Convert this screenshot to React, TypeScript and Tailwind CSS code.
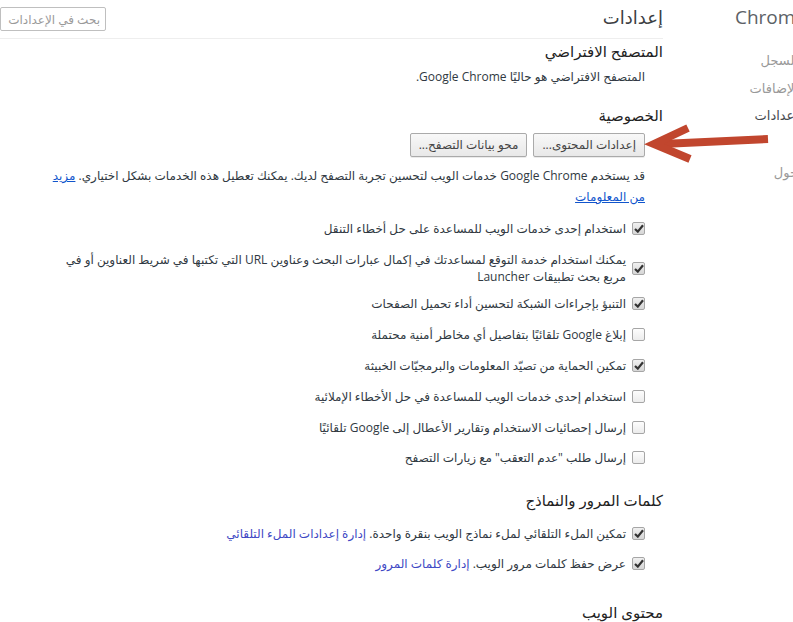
import React from "react";

const checks = [
  { on: true, mt: "mt-[13px]", text: "استخدام إحدى خدمات الويب للمساعدة على حل أخطاء التنقل" },
  {
    on: true,
    mt: "mt-[14px]",
    text: "يمكنك استخدام خدمة التوقع لمساعدتك في إكمال عبارات البحث وعناوين URL التي تكتبها في شريط العناوين أو في مربع بحث تطبيقات Launcher",
  },
  { on: true, mt: "mt-[10px]", text: "التنبؤ بإجراءات الشبكة لتحسين أداء تحميل الصفحات" },
  { on: false, mt: "mt-[14px]", text: "إبلاغ Google تلقائيًا بتفاصيل أي مخاطر أمنية محتملة" },
  { on: true, mt: "mt-[14px]", text: "تمكين الحماية من تصيّد المعلومات والبرمجيّات الخبيثة" },
  { on: false, mt: "mt-[14px]", text: "استخدام إحدى خدمات الويب للمساعدة في حل الأخطاء الإملائية" },
  { on: false, mt: "mt-[14px]", text: "إرسال إحصائيات الاستخدام وتقارير الأعطال إلى Google تلقائيًا" },
  { on: false, mt: "mt-[13px]", text: 'إرسال طلب "عدم التعقب" مع زيارات التصفح' },
];

function Checkbox({ on }: { on: boolean }) {
  return (
    <span
      className={
        "shrink-0 w-[13px] h-[13px] rounded-[2px] border border-[#a6a6a6] flex items-center justify-center " +
        (on ? "bg-gradient-to-b from-[#f0f0f0] to-[#d6d6d6]" : "bg-gradient-to-b from-[#fdfdfd] to-[#ececec]")
      }
    >
      {on && (
        <svg width="10" height="9" viewBox="0 0 10 9">
          <path d="M1 5 L3.8 7.6 L9 1.2" fill="none" stroke="#333" strokeWidth="2.2" />
        </svg>
      )}
    </span>
  );
}

function CheckRow({ on, className, children }: { on: boolean; className?: string; children: React.ReactNode }) {
  return (
    <div className={"flex items-center gap-[6px] " + (className ?? "")}>
      <Checkbox on={on} />
      <span className="text-[12px] leading-[17px] text-[#303942]">{children}</span>
    </div>
  );
}

function Button({ children }: { children: React.ReactNode }) {
  return (
    <button className="h-[24px] px-[8px] rounded-[2px] border border-[#aaaaaa] bg-gradient-to-b from-[#f8f8f8] to-[#e8e8e8] text-[12px] text-[#444] shadow-[0_1px_0_rgba(0,0,0,0.08)]">
      {children}
    </button>
  );
}

export default function App() {
  return (
    <div className="relative w-[793px] h-[622px] overflow-hidden bg-white font-['Open_Sans','DejaVu_Sans',sans-serif]">
      <div dir="rtl" className="flex w-[820px]">
        {/* left nav, mostly cut off */}
        <nav className="w-[157px] shrink-0">
          <div className="pt-[5px] pr-[14px] text-[19px] leading-[24px] text-[#5c6166]">Chrome</div>
          <ul className="pr-[22px] text-[13px] leading-[18px] text-[#999]">
            <li className="mt-[22px]">السجل</li>
            <li className="mt-[10px]">الإضافات</li>
            <li className="mt-[9px] text-[#464a50]">إعدادات</li>
            <li className="mt-[39px]">حول</li>
          </ul>
        </nav>

        <main className="w-[663px] shrink-0">
          <header className="h-[39px] flex justify-between items-start border-b border-[#eeeeee]">
            <h1 className="pt-[5px] text-[18px] leading-[24px] text-[#3c4043] font-normal">إعدادات</h1>
            <input
              placeholder="بحث في الإعدادات"
              className="mt-[7px] w-[106px] h-[24px] px-[5px] rounded-[2px] border border-[#bfbfbf] text-[12px] placeholder:text-[#9a9a9a] outline-none"
            />
          </header>

          <section className="mt-[2px]">
            <h3 className="text-[15px] leading-[20px] text-[#222]">المتصفح الافتراضي</h3>
            <p className="mt-[7px] pr-[18px] text-[12px] leading-[18px] text-[#303942]">
              المتصفح الافتراضي هو حاليًا Google Chrome.
            </p>
          </section>

          <section className="mt-[19px]">
            <h3 className="text-[15px] leading-[20px] text-[#222]">الخصوصية</h3>
            <div className="pr-[18px] pl-[46px]">
              <div className="mt-[8px] flex gap-[6px]">
                <Button>إعدادات المحتوى...</Button>
                <Button>محو بيانات التصفح...</Button>
              </div>
              <p className="mt-[8px] text-[12px] leading-[21px] text-[#303942]">
                قد يستخدم Google Chrome خدمات الويب لتحسين تجربة التصفح لديك. يمكنك تعطيل هذه الخدمات بشكل اختياري.{" "}
                <a className="text-[#1155cc] underline">مزيد من المعلومات</a>
              </p>
              {checks.map((c, i) => (
                <CheckRow key={i} on={c.on} className={c.mt}>
                  {c.text}
                </CheckRow>
              ))}
            </div>
          </section>

          <section className="mt-[24px]">
            <h3 className="text-[15px] leading-[20px] text-[#222]">كلمات المرور والنماذج</h3>
            <div className="pr-[18px]">
              <CheckRow on className="mt-[15px]">
                تمكين الملء التلقائي لملء نماذج الويب بنقرة واحدة.{" "}
                <a className="text-[#4048c4]">إدارة إعدادات الملء التلقائي</a>
              </CheckRow>
              <CheckRow on className="mt-[13px]">
                عرض حفظ كلمات مرور الويب. <a className="text-[#4048c4]">إدارة كلمات المرور</a>
              </CheckRow>
            </div>
          </section>

          <section className="mt-[30px]">
            <h3 className="text-[15px] leading-[20px] text-[#222]">محتوى الويب</h3>
          </section>
        </main>
      </div>

      {/* annotation arrow drawn over the page */}
      <svg className="absolute left-0 top-0 pointer-events-none" width="793" height="622">
        <path d="M768 139 L662 144" stroke="#c1462e" strokeWidth="8" fill="none" />
        <path d="M688 128 L654 144 L690 159" stroke="#c1462e" strokeWidth="8" fill="none" strokeLinejoin="miter" />
      </svg>
    </div>
  );
}
